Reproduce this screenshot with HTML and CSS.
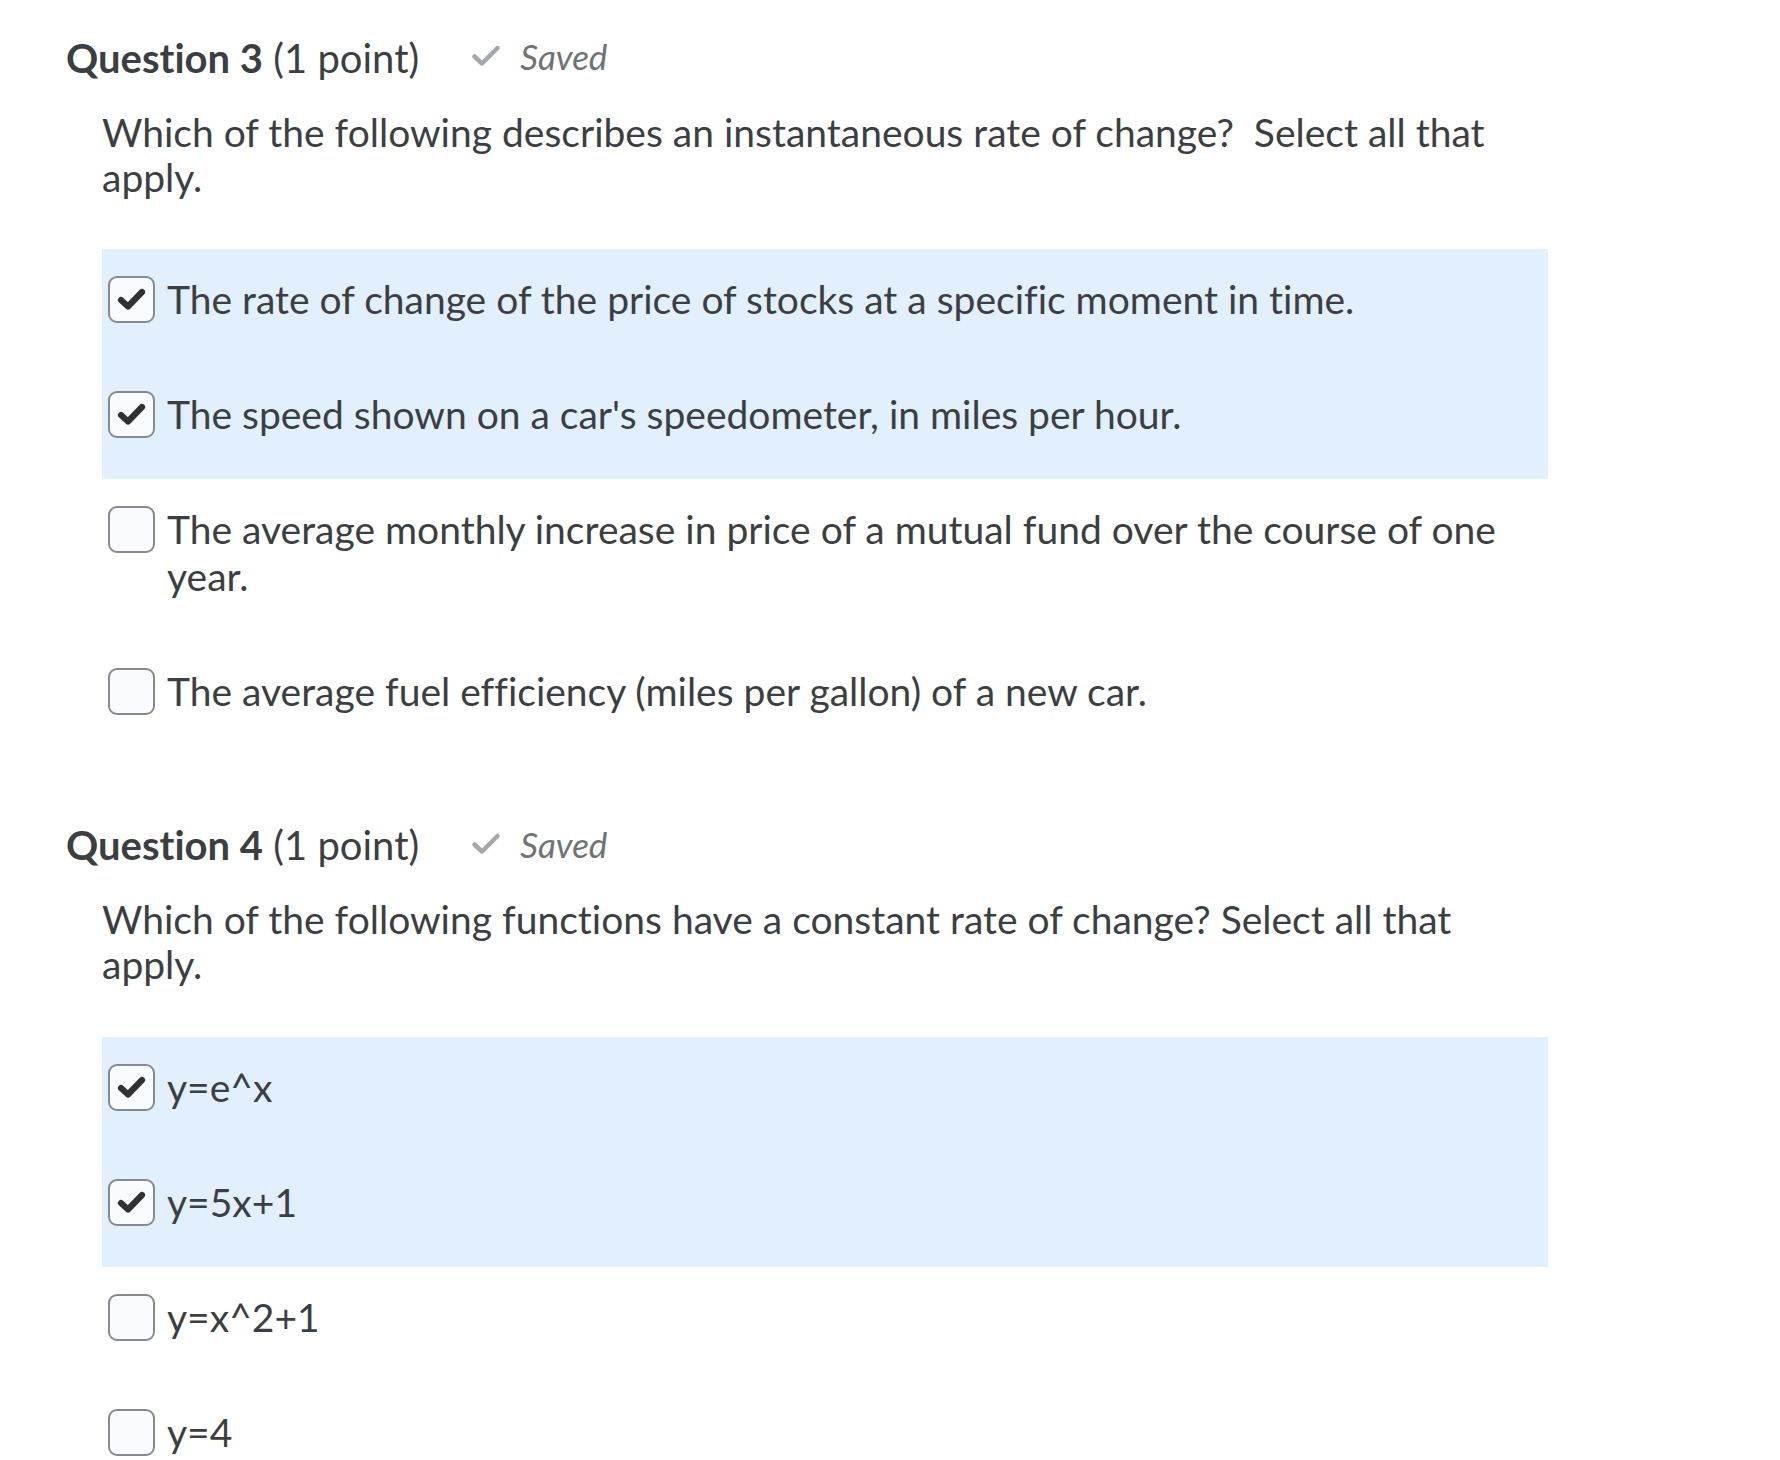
FILE: index.html
```html
<!DOCTYPE html>
<html lang="en">
<head>
<meta charset="utf-8">
<title>Quiz</title>
<link rel="stylesheet" href="styles.css">
</head>
<body>
<main class="quiz">
  <section class="question">
    <h2 class="q-head"><span class="q-title">Question 3</span>&nbsp;(1 point)
      <span class="saved"><svg class="saved-icon" viewBox="0 0 30 24" width="30" height="24"><path d="M3.5 12.5 L11 19.5 L26.5 4" fill="none" stroke="#a3a8ac" stroke-width="4.5" stroke-linecap="round" stroke-linejoin="round"/></svg><span class="saved-text">Saved</span></span>
    </h2>
    <p class="q-text">Which of the following describes an instantaneous rate of change?&nbsp; Select all that apply.</p>
    <ul class="options">
      <li class="opt selected"><span class="box"><svg viewBox="0 0 43 43" width="43" height="43"><path d="M11 22 L18 28.5 L32 14" fill="none" stroke="#2f3235" stroke-width="6.2" stroke-linecap="round" stroke-linejoin="round"/></svg></span><span class="label">The rate of change of the price of stocks at a specific moment in time.</span></li>
      <li class="opt selected"><span class="box"><svg viewBox="0 0 43 43" width="43" height="43"><path d="M11 22 L18 28.5 L32 14" fill="none" stroke="#2f3235" stroke-width="6.2" stroke-linecap="round" stroke-linejoin="round"/></svg></span><span class="label">The speed shown on a car's speedometer, in miles per hour.</span></li>
      <li class="opt"><span class="box"></span><span class="label">The average monthly increase in price of a mutual fund over the course of one year.</span></li>
      <li class="opt"><span class="box"></span><span class="label">The average fuel efficiency (miles per gallon) of a new car.</span></li>
    </ul>
  </section>
  <section class="question">
    <h2 class="q-head"><span class="q-title">Question 4</span>&nbsp;(1 point)
      <span class="saved"><svg class="saved-icon" viewBox="0 0 30 24" width="30" height="24"><path d="M3.5 12.5 L11 19.5 L26.5 4" fill="none" stroke="#a3a8ac" stroke-width="4.5" stroke-linecap="round" stroke-linejoin="round"/></svg><span class="saved-text">Saved</span></span>
    </h2>
    <p class="q-text">Which of the following functions have a constant rate of change? Select all that apply.</p>
    <ul class="options">
      <li class="opt selected"><span class="box"><svg viewBox="0 0 43 43" width="43" height="43"><path d="M11 22 L18 28.5 L32 14" fill="none" stroke="#2f3235" stroke-width="6.2" stroke-linecap="round" stroke-linejoin="round"/></svg></span><span class="label">y=e^x</span></li>
      <li class="opt selected"><span class="box"><svg viewBox="0 0 43 43" width="43" height="43"><path d="M11 22 L18 28.5 L32 14" fill="none" stroke="#2f3235" stroke-width="6.2" stroke-linecap="round" stroke-linejoin="round"/></svg></span><span class="label">y=5x+1</span></li>
      <li class="opt"><span class="box"></span><span class="label">y=x^2+1</span></li>
      <li class="opt"><span class="box"></span><span class="label">y=4</span></li>
    </ul>
  </section>
</main>
</body>
</html>
```
FILE: styles.css
```css
html, body {
  margin: 0;
  padding: 0;
  background: #ffffff;
}

body {
  font-family: Lato, "Open Sans", "Liberation Sans", sans-serif;
  color: #3c3f42;
  font-variant-ligatures: none;
  overflow: hidden;
}

.quiz {
  padding: 36px 0 0 66px;
}

.question {
  margin-bottom: 67.5px;
}

.q-head {
  display: flex;
  align-items: center;
  margin: 0;
  font-size: 40px;
  line-height: 43px;
  font-weight: 400;
  white-space: nowrap;
}

.q-title {
  font-weight: 700;
}

.saved {
  display: flex;
  align-items: center;
  margin-left: 52px;
  margin-bottom: 4px;
  color: #6e7376;
  font-style: italic;
  font-size: 35px;
  line-height: 40px;
}

.saved-icon {
  display: block;
  margin-right: 19px;
}

.q-text {
  margin: 29.5px 0 49.5px 36px;
  width: 1446px;
  font-size: 39px;
  line-height: 45px;
}

.options {
  list-style: none;
  margin: 0 0 0 36px;
  padding: 0;
  width: 1446px;
}

.opt {
  display: flex;
  align-items: flex-start;
  gap: 12px;
  padding: 27px 0 41px 6px;
}

.opt.selected {
  background: #e2effc;
}

.box {
  flex: none;
  box-sizing: border-box;
  width: 47px;
  height: 47px;
  border: 2px solid #868a8e;
  border-radius: 9px;
  background: #f9fbff;
}

.box svg {
  display: block;
}

.label {
  margin-top: 0;
  font-size: 39px;
  line-height: 47px;
}
```
